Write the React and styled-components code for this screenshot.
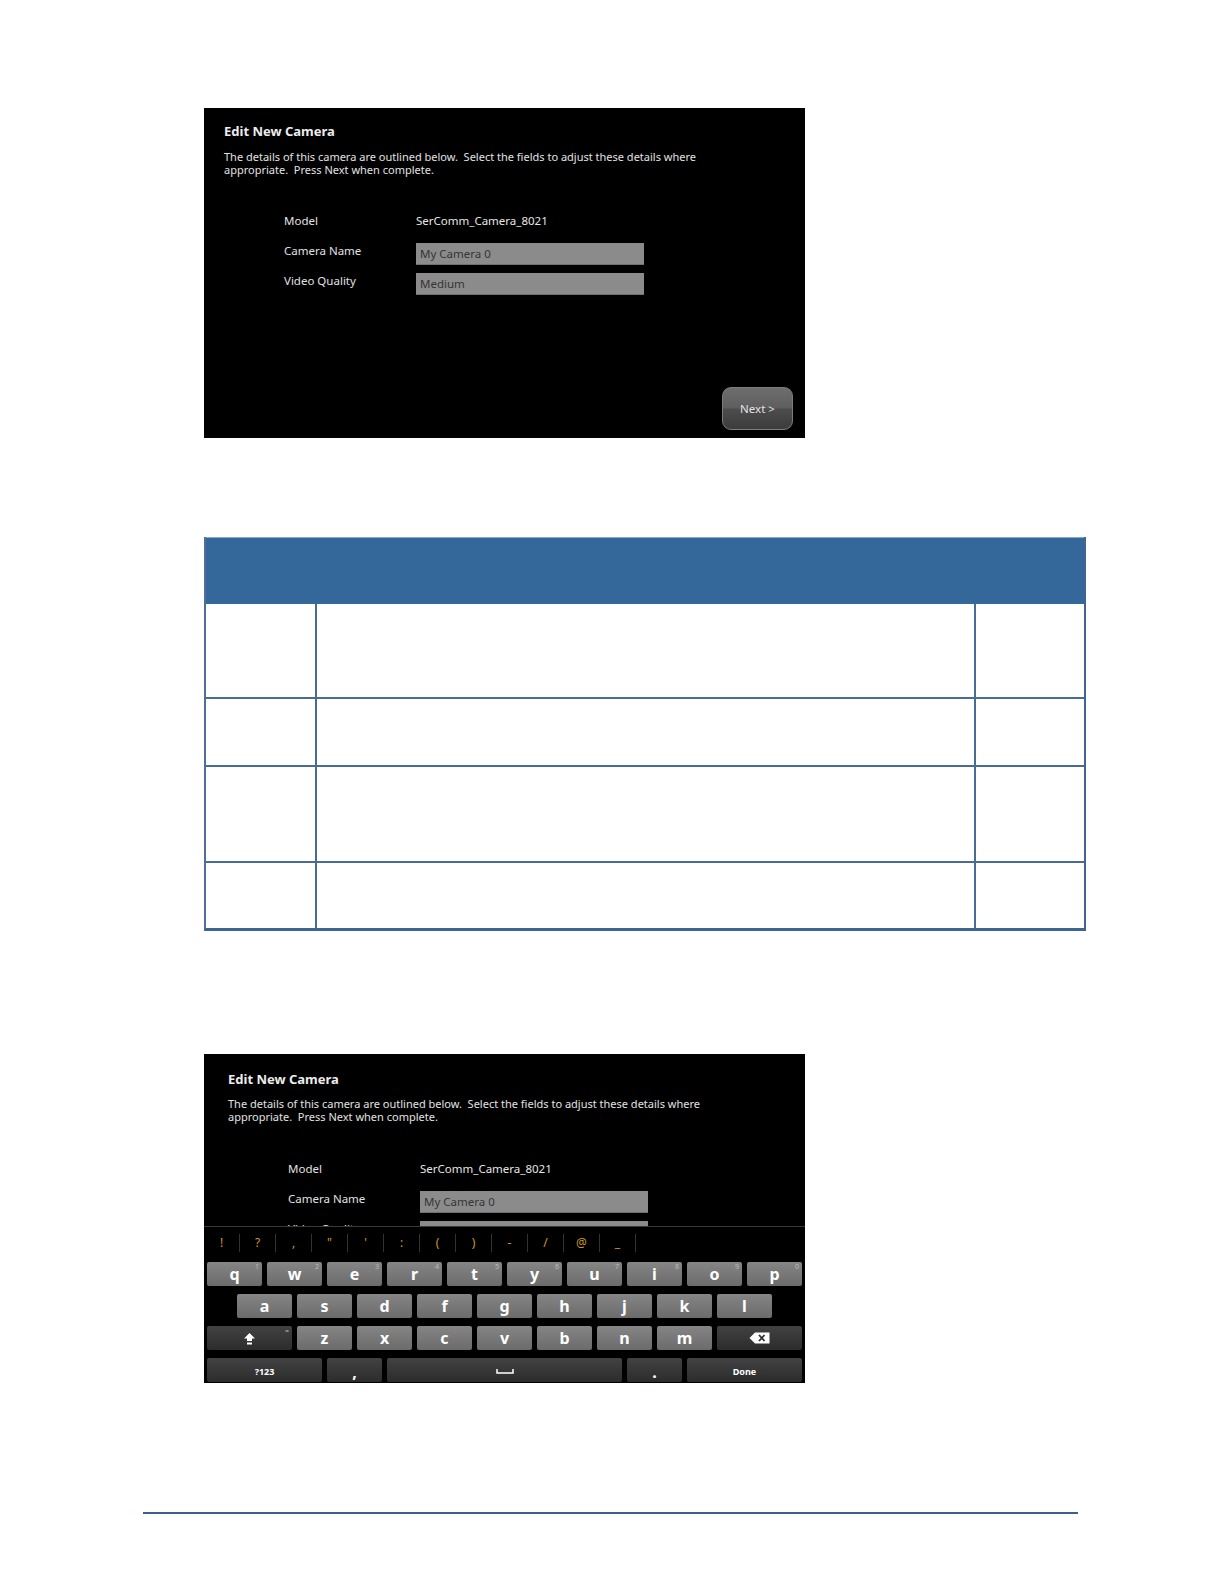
import React from "react";
import styled, { createGlobalStyle } from "styled-components";

const GlobalStyle = createGlobalStyle`
  html, body {
    margin: 0;
    padding: 0;
    background: #ffffff;
  }
  body {
    font-family: "Noto Sans", "Open Sans", sans-serif;
  }
`;

const Page = styled.main`
  width: 1224px;
  min-height: 1584px;
  box-sizing: border-box;
  padding-top: 108px;
  display: flex;
  flex-direction: column;
`;

const Screen = styled.section`
  width: 601px;
  height: ${(p) => p.$height}px;
  margin-left: 204px;
  margin-bottom: ${(p) => p.$after}px;
  background: #000;
  color: #e2e2e2;
  display: flex;
  flex-direction: column;
  overflow: hidden;
  font-family: "Noto Sans", "Open Sans", sans-serif;
`;

const Upper = styled.div`
  flex-shrink: 0;
  box-sizing: border-box;
  padding: ${(p) => p.$top}px 0 0 ${(p) => p.$inset}px;
  height: ${(p) => (p.$clip ? `${p.$clip}px` : "auto")};
  overflow: hidden;
`;

const Title = styled.h1`
  margin: 0;
  font-size: 13px;
  line-height: 18px;
  font-weight: 700;
  color: #ececec;
`;

const Intro = styled.p`
  margin: 9.5px 0 0;
  font-size: 11px;
  line-height: 13px;
  color: #e2e2e2;
`;

const Form = styled.div`
  display: grid;
  grid-template-columns: 132px 228px;
  grid-auto-rows: 22px;
  row-gap: 8px;
  margin: 37.5px 0 0 60px;
`;

const Label = styled.div`
  font-size: 11.5px;
  line-height: 16px;
  color: #e0e0e0;
`;

const Value = styled(Label)`
  color: #e6e6e6;
`;

const Field = styled.div`
  box-sizing: border-box;
  background: #8b8b8b;
  border-bottom: 1px solid #707070;
  color: #353535;
  font-size: 11.5px;
  line-height: 22px;
  padding-left: 4px;
`;

const NextButton = styled.button`
  margin: auto 12px 8px 0;
  align-self: flex-end;
  width: 71px;
  height: 43px;
  box-sizing: border-box;
  border: 1px solid #7c7c7c;
  border-radius: 9px;
  background: linear-gradient(#6e6e6e 0%, #5e5e5e 48%, #4c4c4c 52%, #3c3c3c 100%);
  color: #e4e4e4;
  font-family: "Noto Sans", "Open Sans", sans-serif;
  font-size: 11.5px;
  padding: 0;
`;

const Keyboard = styled.div`
  flex: 1;
  border-top: 1px solid #3a3a3a;
  background: #000;
`;

const Strip = styled.div`
  height: 31px;
  display: flex;
  align-items: center;
`;

const StripItem = styled.span`
  width: 36px;
  height: 18px;
  box-sizing: border-box;
  border-right: 1px solid #333333;
  text-align: center;
  line-height: 18px;
  font-size: 12px;
  color: #cc9a2a;
`;

const Keys = styled.div`
  padding: 4px 3px 0;
  display: flex;
  flex-direction: column;
  gap: 8px;
`;

const KeyRow = styled.div`
  display: grid;
  grid-template-columns: repeat(20, 25px);
  column-gap: 5px;
  height: 24px;
`;

const Key = styled.div`
  position: relative;
  grid-column: ${(p) => (p.$start ? `${p.$start} / ` : "")}span ${(p) => p.$span || 2};
  border-radius: 2px;
  background: ${(p) =>
    p.$dark
      ? "linear-gradient(#424242, #2c2c2c)"
      : "linear-gradient(#858585, #6b6b6b)"};
  color: #ffffff;
  display: flex;
  align-items: center;
  justify-content: center;
  font-size: ${(p) => (p.$small ? "9px" : "16px")};
  font-weight: 700;
  line-height: 1;
  padding-top: ${(p) => (p.$low ? "3px" : "0")};
  box-sizing: border-box;
`;

const Hint = styled.span`
  position: absolute;
  top: 1px;
  right: 3px;
  font-size: 7px;
  font-weight: 400;
  color: #bcbcbc;
`;

const Table = styled.div`
  margin-left: 204px;
  margin-bottom: 123px;
  width: 882px;
  display: grid;
  grid-template-columns: 111px 659px 1fr;
  grid-template-rows: 67px 95px 68px 96px 65px;
  border-left: 2px solid #4f6f97;
  border-right: 2px solid #3f6590;
  border-bottom: 3px solid #3e6590;
  box-sizing: border-box;
`;

const HeadRow = styled.div`
  grid-column: 1 / -1;
  background: #35689a;
  border-top: 1px solid #8aa6c2;
`;

const Cell = styled.div`
  background: #ffffff;
  border-bottom: ${(p) => (p.$last ? "0" : "2px solid #4a6c94")};
  border-right: ${(p) => (p.$end ? "0" : "2px solid #4a6c94")};
`;

const Footer = styled.hr`
  margin: 0 0 0 143px;
  width: 935px;
  height: 2px;
  border: 0;
  background: #3b6189;
`;

const Details = ({ inset, top, clip }) => (
  <Upper $inset={inset} $top={top} $clip={clip}>
    <Title>Edit New Camera</Title>
    <Intro>
      The details of this camera are outlined below.&nbsp; Select the fields to
      adjust these details where
      <br />
      appropriate.&nbsp; Press Next when complete.
    </Intro>
    <Form>
      <Label>Model</Label>
      <Value>SerComm_Camera_8021</Value>
      <Label>Camera Name</Label>
      <Field>My Camera 0</Field>
      <Label>Video Quality</Label>
      <Field>Medium</Field>
    </Form>
  </Upper>
);

const ShiftIcon = () => (
  <svg width="13" height="13" viewBox="0 0 13 13">
    <path d="M6.5 1 L12 6.5 H9 V9 H4 V6.5 H1 Z" fill="#fff" />
    <rect x="4" y="10.5" width="5" height="2" fill="#fff" />
  </svg>
);

const BackspaceIcon = () => (
  <svg width="21" height="12" viewBox="0 0 21 12">
    <path d="M6 0.5 H20.5 V11.5 H6 L0.5 6 Z" fill="#fff" />
    <path d="M10 3 L15.5 9 M15.5 3 L10 9" stroke="#2e2e2e" strokeWidth="1.8" />
  </svg>
);

const SpaceIcon = () => (
  <svg width="18" height="5" viewBox="0 0 18 5">
    <path d="M1 0 V4 H17 V0" fill="none" stroke="#fff" strokeWidth="1.5" />
  </svg>
);

const symbols = ["!", "?", ",", '"', "'", ":", "(", ")", "-", "/", "@", "_"];
const topRow = ["q", "w", "e", "r", "t", "y", "u", "i", "o", "p"];
const homeRow = ["a", "s", "d", "f", "g", "h", "j", "k", "l"];
const lowRow = ["z", "x", "c", "v", "b", "n", "m"];

const SoftKeyboard = () => (
  <Keyboard>
    <Strip>
      {symbols.map((s) => (
        <StripItem key={s}>{s}</StripItem>
      ))}
    </Strip>
    <Keys>
      <KeyRow>
        {topRow.map((k, i) => (
          <Key key={k}>
            {k}
            <Hint>{(i + 1) % 10}</Hint>
          </Key>
        ))}
      </KeyRow>
      <KeyRow>
        {homeRow.map((k, i) => (
          <Key key={k} $start={i === 0 ? 2 : undefined}>
            {k}
          </Key>
        ))}
      </KeyRow>
      <KeyRow>
        <Key $dark $span={3}>
          <ShiftIcon />
          <Hint>=</Hint>
        </Key>
        {lowRow.map((k) => (
          <Key key={k}>{k}</Key>
        ))}
        <Key $dark $span={3}>
          <BackspaceIcon />
        </Key>
      </KeyRow>
      <KeyRow>
        <Key $dark $span={4} $small $low>
          ?123
        </Key>
        <Key $dark $low>,</Key>
        <Key $dark $span={8} $low>
          <SpaceIcon />
        </Key>
        <Key $dark $low>.</Key>
        <Key $dark $span={4} $small $low>
          Done
        </Key>
      </KeyRow>
    </Keys>
  </Keyboard>
);

const rows = [0, 1, 2, 3];

const App = () => (
  <>
    <GlobalStyle />
    <Page>
      <Screen $height={330} $after={99}>
        <Details inset={20} top={14} />
        <NextButton>Next &gt;</NextButton>
      </Screen>

      <Table>
        <HeadRow />
        {rows.map((r) =>
          [0, 1, 2].map((c) => (
            <Cell key={`${r}-${c}`} $last={r === 3} $end={c === 2} />
          ))
        )}
      </Table>

      <Screen $height={329} $after={129}>
        <Details inset={24} top={15.5} clip={172} />
        <SoftKeyboard />
      </Screen>

      <Footer />
    </Page>
  </>
);

export default App;
